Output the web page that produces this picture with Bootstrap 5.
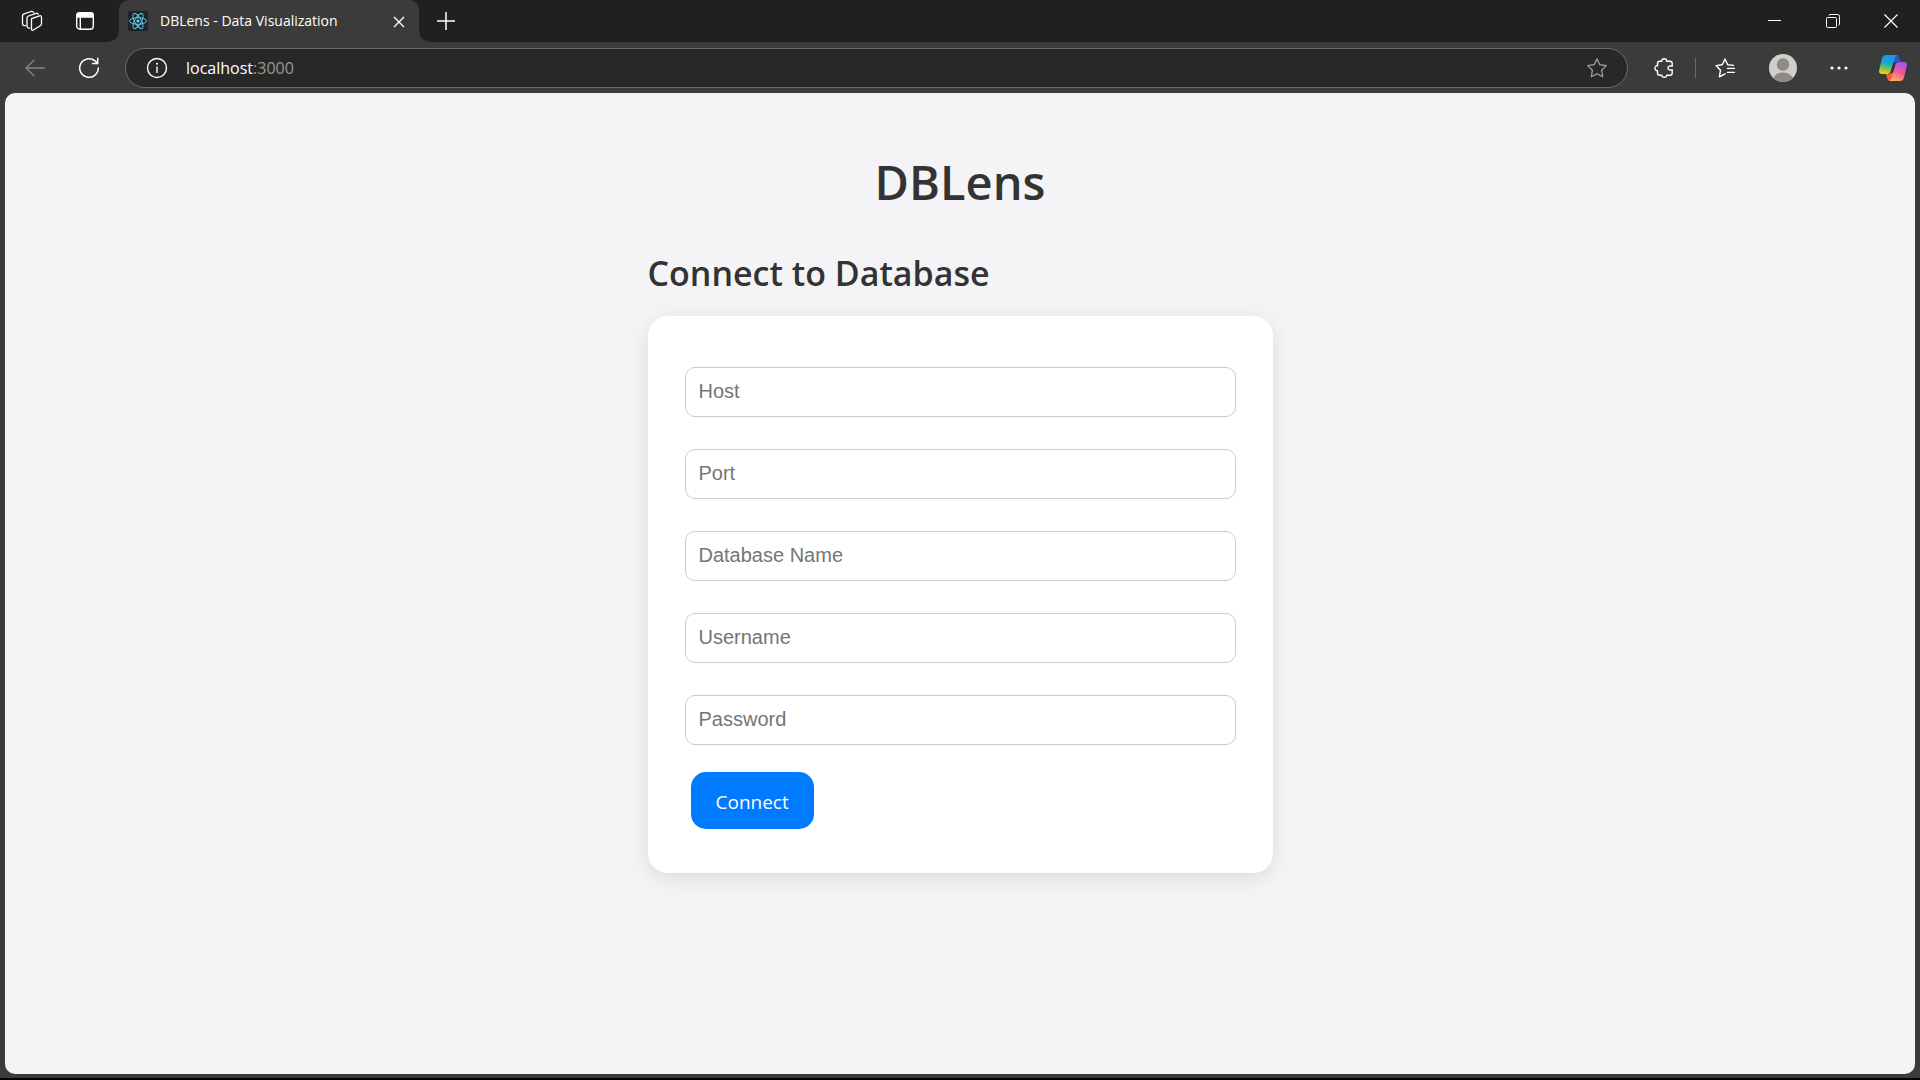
<!DOCTYPE html>
<html lang="en">
<head>
<meta charset="utf-8">
<meta name="viewport" content="width=device-width, initial-scale=1">
<title>DBLens - Data Visualization</title>
<link href="https://cdn.jsdelivr.net/npm/bootstrap@5.3.0/dist/css/bootstrap.min.css" rel="stylesheet">
<style>
  body { background: #3b3b3b; font-family: "Open Sans", "Noto Sans", sans-serif; color: #333; border-bottom: 2px solid #000; }
  svg { fill: none; stroke: #fff; display: block; flex-shrink: 0; }
  .tool-btn { border: 0; padding: 0; background: none; display: flex; align-items: center; justify-content: center; align-self: stretch; flex-shrink: 0; }
  .w-54 { width: 54px; } .w-58 { width: 58px; } .w-64 { width: 64px; } .w-42 { width: 42px; }
  .tab-strip { background: #202020; height: 42px; }
  .tab-item { position: relative; width: 300px; margin-left: 13px; padding: 0 10px 0 9px; background: #3b3b3b; border-radius: 10px 10px 0 0; color: #fff; font-size: 14px; }
  .tab-item::before, .tab-item::after { content: ""; position: absolute; bottom: 0; width: 10px; height: 10px; }
  .tab-item::before { left: -10px; background: radial-gradient(circle at 0 0, #202020 9px, #3b3b3b 10px); }
  .tab-item::after { right: -10px; background: radial-gradient(circle at 100% 0, #202020 9px, #3b3b3b 10px); }
  .tab-label { padding-bottom: 2px; }
  .tool-row { height: 51px; padding-left: 8px; }
  .addr { height: 40px; margin: 0 9px; padding: 0 20px; border: 1px solid #6b6b6b; border-radius: 20px; background: #282828; font-size: 16px; color: #999; }
  .addr a { color: #fff; }
  .addr-text { margin-left: 18px; }
  .split { width: 1px; height: 20px; background: #6a6a6a; }
  .page-view { margin: 0 5px 4px; padding-top: 59px; background: #f4f4f7; border-radius: 10px; }
  .app-title { font-size: 47px; line-height: 60px; margin-bottom: 38px; font-weight: 600; }
  .connect { width: 625px; max-width: 100%; }
  .connect h2 { font-size: 34px; line-height: 46px; margin-bottom: 20px; font-weight: 600; }
  .panel { padding: 51px 37px 44px; background: #fff; border-radius: 20px; box-shadow: 0 5px 20px rgba(0,0,0,.1); }
  .fields { gap: 32px; margin-bottom: 27px; font: 20px/30px "Liberation Sans", Arial, sans-serif; }
  .fields .form-control { height: 50px; padding: 8px 13px 10px; border-color: #ccc; border-radius: 10px; font: inherit; }
  .fields label { position: absolute; inset: 0 auto auto 0; padding: 9px 14px; color: #757575; pointer-events: none; }
  .fields .form-control:not(:placeholder-shown) + label { opacity: 0; }
  .btn-connect { --bs-btn-bg: #007bff; --bs-btn-color: #fff; --bs-btn-hover-bg: #006be0; --bs-btn-hover-color: #fff; height: 57px; margin-left: 6px; padding: 3px 25px 0; border: 0; border-radius: 15px; font-size: 19px; line-height: 28px; }
</style>
<script src="https://cdn.jsdelivr.net/npm/bootstrap@5.3.0/dist/js/bootstrap.bundle.min.js" defer></script>
</head>
<body class="d-flex flex-column min-vh-100">
<header>
  <div class="tab-strip d-flex align-items-center">
    <button class="tool-btn w-64" aria-label="Workspaces"><svg width="22" height="22" viewBox="0 0 22 22" stroke-width="1.3" stroke-linejoin="round" stroke-linecap="round"><path d="M10.5 8.6 18.6 5.8Q20.5 5.4 20.5 7.2V13.6Q20.5 15 19.2 15.8L12.4 20Q10.5 21 10.5 18.8Z"/><path d="M8.7 18.2Q6 18.4 6 15.5V8.200Q6 6.600 7.500 6L15 3.300Q16.700 2.800 17.200 4.400"/><path d="M4.800 15.500Q1.500 16.500 1.500 13V6Q1.500 4.500 3 3.900L10 1.500Q12 1 12.700 2.600"/></svg></button>
    <button class="tool-btn w-42" aria-label="Tab actions"><svg width="18" height="18" viewBox="0 0 18 18" stroke-width="1.400"><rect x=".7" y=".7" width="16.600" height="16.600" rx="3.200"/><path d="M1 2.500Q1 1 3 1H15Q17 1 17 2.500V5H1Z" fill="#fff"/><path d="M4.300 5V17"/></svg></button>
    <div class="tab-item d-flex align-items-center align-self-stretch">
      <svg width="20" height="20" viewBox="0 0 20 20"><rect width="20" height="20" rx="2" fill="#20232a" stroke="none"/><g stroke="#61dafb" stroke-width=".9"><ellipse cx="10" cy="10" rx="8.500" ry="3.300"/><ellipse cx="10" cy="10" rx="8.500" ry="3.300" transform="rotate(60 10 10)"/><ellipse cx="10" cy="10" rx="8.500" ry="3.300" transform="rotate(120 10 10)"/></g><circle cx="10" cy="10" r="1.600" fill="#61dafb" stroke="none"/></svg>
      <span class="tab-label flex-grow-1 text-nowrap ms-2 ps-1">DBLens - Data Visualization</span>
      <button class="tool-btn" aria-label="Close tab"><svg width="20" height="20" viewBox="0 0 20 20" stroke-width="1.400"><path d="M5 6 15 16M15 6 5 16"/></svg></button>
    </div>
    <button class="tool-btn w-54" aria-label="New tab"><svg width="18" height="18" viewBox="0 0 18 18" stroke-width="1.500"><path d="M9 0V18M0 9H18"/></svg></button>
    <div class="ms-auto d-flex align-self-stretch">
      <button class="tool-btn w-58" aria-label="Minimize"><svg width="14" height="14" viewBox="0 0 14 14"><path d="M0 6.500H13"/></svg></button>
      <button class="tool-btn w-58" aria-label="Restore"><svg width="14" height="14" viewBox="0 0 14 14"><rect x=".5" y="3.500" width="10" height="10" rx="1"/><path d="M3 1.500Q3 .5 4 .5H11.500Q13.500 .5 13.500 2.500V10Q13.500 11 12.500 11.500"/></svg></button>
      <button class="tool-btn w-58" aria-label="Close"><svg width="14" height="14" viewBox="0 0 14 14" stroke-width="1.200"><path d="M.5 .5 13.500 13.500M13.500 .5 .5 13.500"/></svg></button>
    </div>
  </div>
  <nav class="tool-row d-flex align-items-center" aria-label="Browser toolbar">
    <button class="tool-btn w-54" aria-label="Back"><svg width="20" height="18" viewBox="0 0 20 18" stroke-width="1.300"><path stroke="#858585" d="M20 9H1M9.500 .8 1 9 9.500 17.200"/></svg></button>
    <button class="tool-btn w-54" aria-label="Refresh"><svg width="22" height="22" viewBox="0 0 22 22" stroke-width="1.500" stroke-linecap="round"><path d="M20.300 11A9.300 9.300 0 1 1 17 3.900L19.500 6.300M19.700 1.300V6.500H14.500"/></svg></button>
    <div class="addr d-flex align-items-center flex-grow-1">
      <svg width="22" height="22" viewBox="0 0 22 22" stroke-width="1.400"><circle cx="11" cy="11" r="9.500"/><path d="M11 9.500V16"/><circle cx="11" cy="6.800" r="1" fill="#fff" stroke="none"/></svg>
      <span class="addr-text flex-grow-1 text-nowrap"><a href="#" class="text-decoration-none">localhost</a>:3000</span>
      <button class="tool-btn" aria-label="Add to favorites"><svg width="20" height="20" viewBox="0 0 20 20"><path stroke="#a5a5a5" stroke-width="1.200" stroke-linejoin="round" d="M10 .8 12.800 6.700 19.300 7.600 14.600 12.200 15.700 18.800 10 15.700 4.300 18.800 5.400 12.200 .7 7.600 7.200 6.700Z"/></svg></button>
    </div>
    <button class="tool-btn w-54 me-1" aria-label="Extensions"><svg width="20" height="20" viewBox="0 0 20 20" stroke-width="1.400" stroke-linejoin="round"><path d="M7.800 3.300C7.600 1.500 8.800 .8 10.200 .8S12.800 1.500 12.600 3.300H16Q18.200 3.300 18.200 5.500V8.200C15.800 7.500 14 8.300 14 10S15.800 12.500 18.200 11.800V15Q18.200 17.200 16 17.200H12.700C12.900 18.500 11.800 19.300 10.300 19.300S7.600 18.500 7.800 17.200H5.700Q3.500 17.200 3.500 15V12.600C1.800 12.800 1 11.600 1 10.200S1.800 7.600 3.500 7.800V5.500Q3.500 3.300 5.700 3.300Z"/></svg></button>
    <div class="split"></div>
    <button class="tool-btn w-58" aria-label="Favorites"><svg width="20" height="20" viewBox="0 0 20 20" stroke-width="1.400" stroke-linejoin="round" stroke-linecap="round"><path d="M18.500 7.400 12.700 6.700 10 1 7.300 6.700 1 7.600 5.500 12.200 4.400 18.800 10 15.800M12.500 10.400H19.500M12.500 14.400H19.500"/></svg></button>
    <button class="tool-btn w-58" aria-label="Profile"><svg width="28" height="28" viewBox="0 0 28 28"><defs><clipPath id="face"><circle cx="14" cy="14" r="14"/></clipPath></defs><g clip-path="url(#face)" stroke="none"><rect width="28" height="28" fill="#d0ceca"/><circle cx="14" cy="10.500" r="6.200" fill="#8e8a86"/><ellipse cx="14" cy="27" rx="10.500" ry="8.500" fill="#8e8a86"/></g></svg></button>
    <button class="tool-btn w-54" aria-label="Settings and more"><svg width="18" height="4" viewBox="0 0 18 4"><g fill="#fff" stroke="none"><circle cx="2" cy="2" r="1.600"/><circle cx="9" cy="2" r="1.600"/><circle cx="16" cy="2" r="1.600"/></g></svg></button>
    <button class="tool-btn w-54" aria-label="Copilot"><svg width="28" height="26" viewBox="0 0 28 26">
      <defs>
        <linearGradient id="cool" x1=".5" y1="0" x2=".3" y2="1"><stop offset="0" stop-color="#1697ee"/><stop offset=".4" stop-color="#19a4d8"/><stop offset=".7" stop-color="#6fc35d"/><stop offset="1" stop-color="#ffd000"/></linearGradient>
        <linearGradient id="warm" x1=".7" y1="0" x2=".3" y2="1"><stop offset="0" stop-color="#a653f0"/><stop offset=".5" stop-color="#f0569a"/><stop offset="1" stop-color="#ffb257"/></linearGradient>
      </defs>
      <g stroke="none">
      <path fill="#2458dc" d="M14 0H17Q19.500 0 20.300 2.800L21.500 7H18Q16.500 7 16 8.500L14 13Z"/>
      <path fill="#fb5a35" d="M7 19H11L13 13 14 17V26H11Q9 26 8.400 24Z"/>
      <path fill="url(#cool)" d="M7 0H19Q16.500 .5 15.600 3.500L11.800 16Q10.800 19 8 19H3Q-.5 19 .2 15L3 3.500Q4 0 7 0Z"/>
      <path fill="url(#warm)" d="M21 7H25Q28.500 7 27.800 11L25 22.500Q24 26 21 26H10Q12 25.500 12.800 22.500L16.200 10Q17.200 7 21 7Z"/>
      <path fill="#363636" d="M14.500 7.500H17.500Q16.400 8.400 15.800 10.500L13.500 18H11.200L12.300 14.500Z"/>
      </g>
    </svg></button>
  </nav>
</header>
<main class="page-view flex-grow-1 d-flex flex-column align-items-center">
  <h1 class="app-title">DBLens</h1>
  <section class="connect">
    <h2>Connect to Database</h2>
    <form class="panel">
      <div class="fields d-flex flex-column">
        <div class="position-relative"><input class="form-control" id="host" type="text" placeholder=" "><label for="host">Host</label></div>
        <div class="position-relative"><input class="form-control" id="port" type="text" placeholder=" "><label for="port">Port</label></div>
        <div class="position-relative"><input class="form-control" id="dbname" type="text" placeholder=" "><label for="dbname">Database Name</label></div>
        <div class="position-relative"><input class="form-control" id="user" type="text" placeholder=" "><label for="user">Username</label></div>
        <div class="position-relative"><input class="form-control" id="pass" type="password" placeholder=" "><label for="pass">Password</label></div>
      </div>
      <button type="button" class="btn btn-connect">Connect</button>
    </form>
  </section>
</main>
</body>
</html>
